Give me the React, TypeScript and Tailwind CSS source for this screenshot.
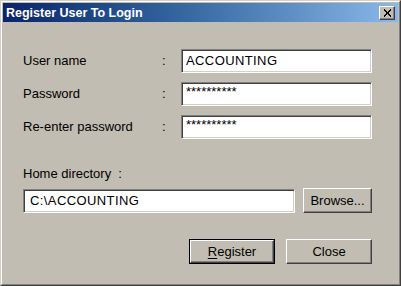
import React from "react";

const sunken =
  "border border-t-[#808080] border-l-[#808080] border-b-white border-r-white shadow-[inset_1px_1px_0_#404040,inset_-1px_-1px_0_#d4d0c8] bg-white";

const raised =
  "bg-[#c1bdb2] border border-t-white border-l-white border-b-[#404040] border-r-[#404040] shadow-[inset_-1px_-1px_0_#808080]";

function Field({ label, value, password }: { label: string; value: string; password?: boolean }) {
  return (
    <div className="flex items-center h-[24px]">
      <div className="w-[139px] text-[13px] leading-[16px] text-black">{label}</div>
      <div className="w-[19px] text-[13px] leading-[16px] text-black">:</div>
      <div className={`w-[191px] h-[24px] flex items-center pl-[4px] ${sunken}`}>
        <span
          className={
            password
              ? "text-[13px] leading-[16px] text-black -mt-[5px]"
              : "text-[13px] leading-[16px] text-black tracking-[0.4px]"
          }
        >
          {value}
        </span>
      </div>
    </div>
  );
}

export default function App() {
  return (
    <div className="w-[401px] h-[286px] font-['Liberation_Sans',Arial,sans-serif] bg-[#c1bdb2] border border-t-[#d4d0c8] border-l-[#d4d0c8] border-b-[#404040] border-r-[#404040] overflow-hidden">
      <div className="w-full h-full border border-t-white border-l-white border-b-[#808080] border-r-[#808080] p-[1px] flex flex-col">
        {/* title bar */}
        <div className="h-[19px] bg-gradient-to-r from-[#0a246a] via-[#3a6ea5] to-[#8ab8ea] flex items-center justify-between pl-[3px] pr-[3px]">
          <span className="text-white font-bold text-[12.5px] leading-[16px]">Register User To Login</span>
          <div className={`w-[16px] h-[14px] flex items-center justify-center ${raised}`}>
            <svg width="9" height="8" viewBox="0 0 9 8">
              <path d="M1 0.5 L8 7.5 M8 0.5 L1 7.5" stroke="black" strokeWidth="2" shapeRendering="crispEdges" fill="none" />
            </svg>
          </div>
        </div>

        {/* content */}
        <div className="pl-[20px] pr-[26px] pt-[27px] flex flex-col">
          <div className="flex flex-col gap-[9px]">
            <Field label="User name" value="ACCOUNTING" />
            <Field label="Password" value="**********" password />
            <Field label="Re-enter password" value="**********" password />
          </div>

          <div className="mt-[27px] text-[13px] leading-[16px] text-black">
            Home directory&nbsp;&nbsp;:
          </div>

          <div className="mt-[6px] flex items-start gap-[8px]">
            <div className={`mt-[1px] w-[272px] h-[24px] flex items-center pl-[6px] ${sunken}`}>
              <span className="text-[13px] leading-[16px] text-black tracking-[0.4px]">C:\ACCOUNTING</span>
            </div>
            <button className={`w-[69px] h-[25px] flex items-center justify-center text-[13px] leading-[16px] text-black ${raised}`}>
              Browse...
            </button>
          </div>

          <div className="mt-[26px] flex justify-end gap-[11px]">
            <button className="w-[86px] h-[25px] border border-black bg-[#c1bdb2]">
              <div className={`w-full h-full flex items-center justify-center text-[13px] leading-[16px] text-black ${raised}`}>
                <span>
                  <span className="underline underline-offset-2">R</span>egister
                </span>
              </div>
            </button>
            <button className={`w-[86px] h-[25px] flex items-center justify-center text-[13px] leading-[16px] text-black ${raised}`}>
              Close
            </button>
          </div>
        </div>
      </div>
    </div>
  );
}
